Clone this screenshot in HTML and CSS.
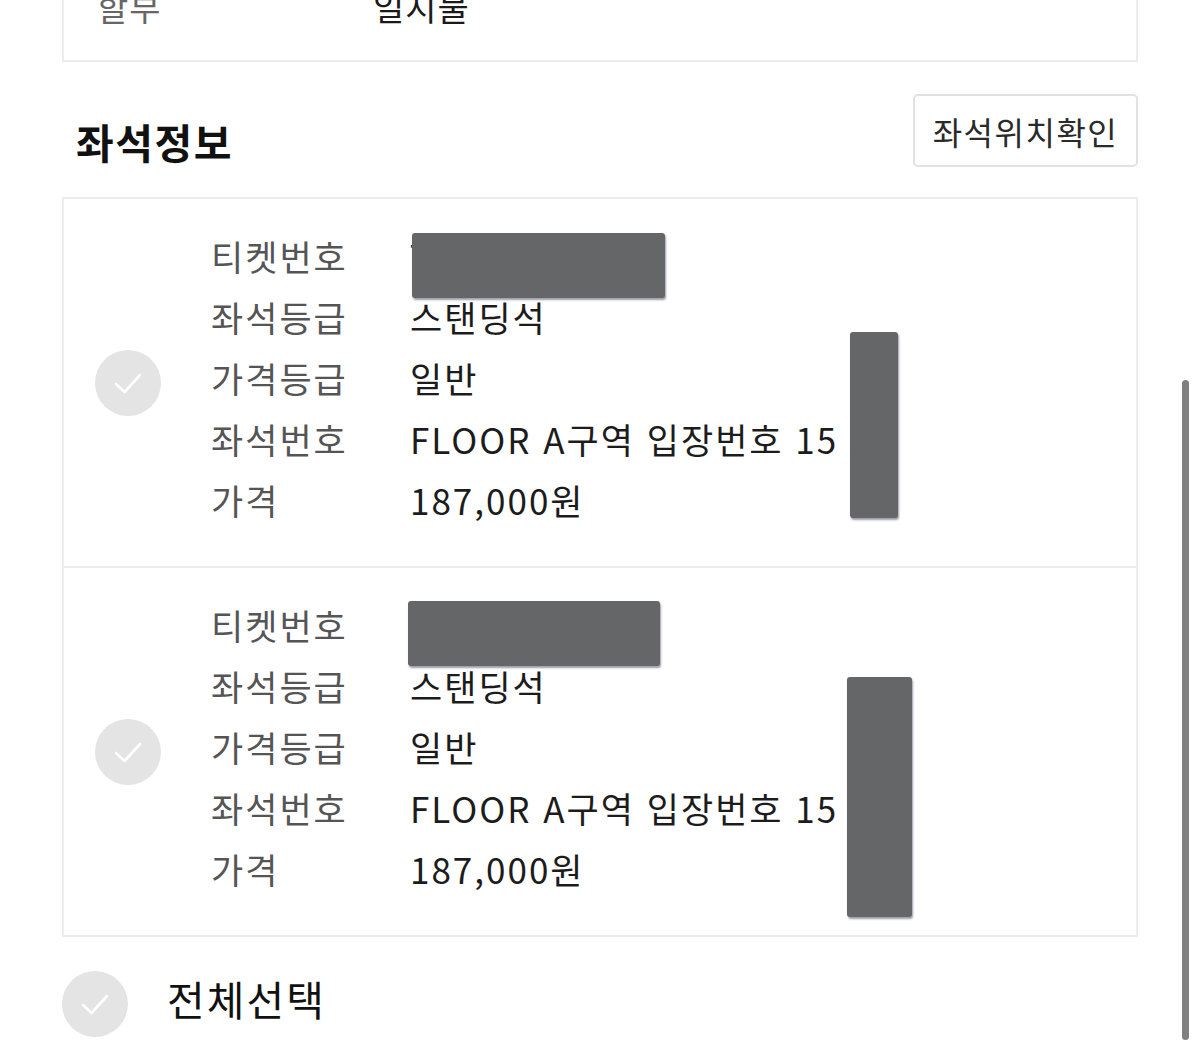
FILE: index.html
```html
<!DOCTYPE html>
<html lang="ko">
<head>
<meta charset="utf-8">
<title>좌석정보</title>
<link rel="stylesheet" href="styles.css">
</head>
<body>
<div class="page">
  <div class="pay-card">
    <div class="pay-row">
      <span class="pay-label">할부</span>
      <span class="pay-value">일시불</span>
    </div>
  </div>

  <div class="section-head">
    <h2 class="section-title">좌석정보</h2>
    <button class="seat-btn" type="button">좌석위치확인</button>
  </div>

  <div class="ticket-list">
    <div class="ticket">
      <div class="check"><svg viewBox="0 0 66 66" width="66" height="66"><circle cx="33" cy="33" r="33" fill="#e4e4e4"/><path d="M21 34 L29.5 42 L45 25" fill="none" stroke="#fff" stroke-width="2.6" stroke-linecap="round" stroke-linejoin="round"/></svg></div>
      <dl class="info">
        <div class="line"><dt>티켓번호</dt><dd>T</dd></div>
        <div class="line"><dt>좌석등급</dt><dd>스탠딩석</dd></div>
        <div class="line"><dt>가격등급</dt><dd>일반</dd></div>
        <div class="line"><dt>좌석번호</dt><dd>FLOOR A구역 입장번호 15</dd></div>
        <div class="line"><dt>가격</dt><dd>187,000원</dd></div>
      </dl>
      <span class="redact r1a"></span>
      <span class="redact r1b"></span>
    </div>
    <div class="ticket">
      <div class="check"><svg viewBox="0 0 66 66" width="66" height="66"><circle cx="33" cy="33" r="33" fill="#e4e4e4"/><path d="M21 34 L29.5 42 L45 25" fill="none" stroke="#fff" stroke-width="2.6" stroke-linecap="round" stroke-linejoin="round"/></svg></div>
      <dl class="info">
        <div class="line"><dt>티켓번호</dt><dd>T</dd></div>
        <div class="line"><dt>좌석등급</dt><dd>스탠딩석</dd></div>
        <div class="line"><dt>가격등급</dt><dd>일반</dd></div>
        <div class="line"><dt>좌석번호</dt><dd>FLOOR A구역 입장번호 15</dd></div>
        <div class="line"><dt>가격</dt><dd>187,000원</dd></div>
      </dl>
      <span class="redact r2a"></span>
      <span class="redact r2b"></span>
    </div>
  </div>

  <div class="select-all">
    <div class="check"><svg viewBox="0 0 66 66" width="66" height="66"><circle cx="33" cy="33" r="33" fill="#e4e4e4"/><path d="M21 34 L29.5 42 L45 25" fill="none" stroke="#fff" stroke-width="2.6" stroke-linecap="round" stroke-linejoin="round"/></svg></div>
    <span class="select-all-text">전체선택</span>
  </div>
</div>
<div class="scrollbar"></div>
</body>
</html>
```

FILE: styles.css
```css
html, body {
  margin: 0;
  padding: 0;
  background: #fff;
  overflow: hidden;
}
body {
  font-family: "Noto Sans CJK KR", "Noto Sans", sans-serif;
  color: #1a1a1a;
}
.page {
  padding: 0 62px;
}
.pay-card {
  margin-top: -40px;
  border: 2px solid #ececec;
  border-top: none;
  height: 102px;
  box-sizing: border-box;
}
.pay-row {
  display: flex;
  padding-left: 33px;
  font-size: 34px;
  letter-spacing: 1px;
  line-height: 40px;
  padding-top: 27px;
}
.pay-label {
  width: 276px;
  color: #666;
}
.pay-value {
  color: #1a1a1a;
}
.section-head {
  display: flex;
  justify-content: space-between;
  align-items: flex-start;
  height: 135px;
  padding-left: 14px;
}
.section-title {
  margin: 54px 0 0;
  font-size: 41px;
  line-height: 50px;
  letter-spacing: 1.5px;
  font-weight: 700;
  color: #111;
}
.seat-btn {
  width: 225px;
  height: 73px;
  margin-top: 32px;
  border: 2px solid #e2e2e2;
  border-radius: 5px;
  background: #fff;
  font-family: "Noto Sans CJK KR", sans-serif;
  font-size: 32px;
  letter-spacing: 1.5px;
  color: #2a2a2a;
  padding: 0;
}
.ticket-list {
  border: 2px solid #ececec;
}
.ticket {
  position: relative;
  display: flex;
  align-items: center;
  padding-left: 31px;
}
.ticket + .ticket {
  border-top: 2px solid #ececec;
}
.check {
  width: 66px;
  height: 66px;
  flex: none;
}
.check svg {
  display: block;
}
.info {
  margin: 0 0 0 50px;
  padding: 26px 0 36px;
}
.line {
  display: flex;
  height: 61px;
  align-items: center;
  font-size: 35px;
  letter-spacing: 2px;
}
.line dt {
  width: 199px;
  color: #555;
}
.line dd {
  margin: 0;
  color: #1c1c1c;
}
.redact {
  position: absolute;
  background: #646668;
  border-radius: 3px;
  box-shadow: 1px 2px 2px rgba(60, 60, 90, 0.5);
}
.r1a { left: 348px; top: 34px; width: 253px; height: 65px; }
.r1b { left: 786px; top: 133px; width: 48px; height: 186px; }
.r2a { left: 344px; top: 33px; width: 252px; height: 65px; }
.r2b { left: 783px; top: 109px; width: 65px; height: 240px; }
.select-all {
  display: flex;
  align-items: center;
  height: 134px;
}
.select-all-text {
  margin-left: 39px;
  font-size: 41px;
  letter-spacing: 2px;
  color: #111;
  margin-top: -12px;
}
.scrollbar {
  position: fixed;
  left: 1182px;
  top: 380px;
  width: 7px;
  height: 660px;
  border-radius: 4px;
  background: #808080;
}
```
